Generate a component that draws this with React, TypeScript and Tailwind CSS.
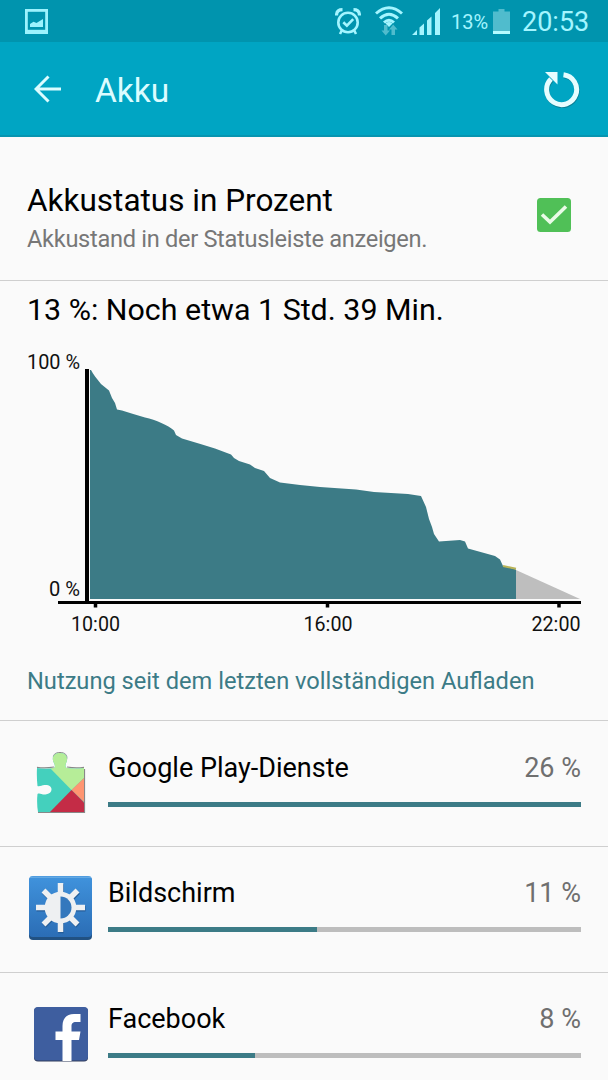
import React from "react";

function PictureIcon() {
  return (
    <svg width="23" height="25" viewBox="0 0 23 25">
      <rect x="1.4" y="1.4" width="20.2" height="22.2" fill="none" stroke="#9cf2fd" strokeWidth="2.8" />
      <path d="M1 20.8h21V25H1z" fill="#9cf2fd" />
      <path d="M5 18v-3l3.500-2.200 3 1.200L18 10v8z" fill="#9cf2fd" />
    </svg>
  );
}

function AlarmIcon() {
  return (
    <svg width="26" height="27" viewBox="0 0 26 27" fill="none" stroke="#a4f5ff">
      <circle cx="13" cy="14.500" r="9.700" strokeWidth="2.600" />
      <path d="M8.300 14.200l3.600 3.500 6.300-6.500" strokeWidth="2.600" />
      <path d="M1.500 7.500C1.500 3.500 4 1.700 7.500 1.700M24.500 7.500C24.500 3.500 22 1.700 18.500 1.700" strokeWidth="3.200" />
      <path d="M6.800 22.500L5 26M19.200 22.500L21 26" strokeWidth="2.600" />
    </svg>
  );
}

function WifiIcon() {
  return (
    <svg width="28" height="30" viewBox="0 0 28 30" fill="none">
      <path d="M1 7.500Q14-4 27 7.500M5 12.300Q14 4.200 23 12.300M9 16.500Q14 12 19 16.500" stroke="#a4f5ff" strokeWidth="3" />
      <path d="M10.500 17.500Q14 14.700 17.500 17.500L14 21z" fill="#a4f5ff" />
      <path d="M9 19h3.500v5.500H15L10.700 29.500 6.500 24.500H9zM16.500 29v-5.500H14L18.200 18.500l4.300 5H20V29z" fill="#50bccd" />
    </svg>
  );
}

function SignalIcon() {
  return (
    <svg width="28" height="27" viewBox="0 0 28 27" fill="#a4f5ff">
      <path d="M0 27l5-5V27zM7.500 27v-7.500l4.500-4V27zM15 27V12.500l4.500-4V27zM23 27V5L28 0v27z" />
    </svg>
  );
}

function BatteryIcon() {
  return (
    <svg width="17" height="25" viewBox="0 0 17 25">
      <path d="M0 2.500h5.500V0h6v2.500H17V25H0z" fill="#50bccd" />
      <path d="M0 22h17v3H0z" fill="#b4fbff" />
    </svg>
  );
}

function PlayServicesIcon() {
  return (
    <svg width="52" height="64" viewBox="0 0 52 64" className="ml-[2px]">
      <defs>
        <clipPath id="puzzle">
          <path d="M2 17Q10 18.500 19 17C20.500 16.500 20 13.500 18.500 11C16.500 6.500 19 2 25 2S33 6.500 31.500 11C30 14 30 16.500 32 17Q41 18.500 49 17V61H3Q1.500 52 2.500 43C4.500 41.500 7 44 10.500 43.500C14.500 43 16.500 41 16.500 38.500S14.500 34 10.500 34C7 33.500 5 36 2.500 35Q1.500 26 2 17Z" />
        </clipPath>
      </defs>
      <path d="M2 16.300Q10 17.500 19 16M32 16Q41 17.500 49 16.300M3 61.500H49.500V18" fill="none" stroke="#888" strokeWidth="1.200" />
      <path d="M19 9C17 4 20 1.500 25 1.500S33 4 31.500 9" fill="none" stroke="#888" strokeWidth="1" />
      <g clipPath="url(#puzzle)">
        <path d="M0 0h52v64H0z" fill="#44d0bd" />
        <path d="M14 16V0h38v24L36.500 39z" fill="#b6ed98" />
        <path d="M36.500 39L52 24v30z" fill="#ff9571" />
        <path d="M14 62l22.500-23L50 52.500V62z" fill="#c42c46" />
      </g>
    </svg>
  );
}

function BrightnessIcon() {
  return (
    <svg width="66" height="66" viewBox="0 0 66 66">
      <defs>
        <linearGradient id="display" x1="0" y1="0" x2="0" y2="1">
          <stop stopColor="#4093dd" />
          <stop offset="1" stopColor="#2b6db5" />
        </linearGradient>
      </defs>
      <rect x="2" y="2" width="63" height="63" rx="4" fill="#215182" />
      <rect x="2" y="1" width="63" height="61" rx="4" fill="url(#display)" />
      <path d="M3 2.200h61" stroke="#75b4e7" />
      <g transform="translate(.5 0)">
        <path d="M33 8v49M8.500 32.500h49M16 15.500l34 34M50 15.500l-34 34" stroke="#245d98" strokeWidth="5.500" transform="translate(.5 1.200)" />
        <path d="M33 8v49M8.500 32.500h49M16 15.500l34 34M50 15.500l-34 34" stroke="#eef0f2" strokeWidth="5.500" />
        <circle cx="33" cy="32.500" r="15.800" fill="#eef0f2" />
        <path d="M33 21.500a11 11 0 0 1 0 22z" fill="#3478bd" />
      </g>
    </svg>
  );
}

function FacebookIcon() {
  return (
    <svg width="56" height="56" viewBox="0 0 56 56" className="ml-[2px]">
      <rect x="1" y="1.500" width="54" height="54" rx="4" fill="#303c5c" />
      <rect x="1" y="1" width="54" height="53.500" rx="4" fill="#3e5e9f" />
      <path d="M29.500 55V34H22.500V25.500H29.500V20C29.500 12 34 8 41 8H47.500V16H43C39.500 16 38.500 17.500 38.500 20.500V25.500H47.500L46 34H38.500V55Z" fill="#fff" />
    </svg>
  );
}

function BatteryChart() {
  return (
    <svg width="608" height="310" viewBox="0 340 608 310" className="block shrink-0 font-['Roboto',sans-serif] text-[20px]">
      <path
        d="M90 370L91 370C93 374 97 379 101 384L109 390.500L112 398L115 403L117 409.500L122 410.500Q133 414 145 417.500C156 420 168 425 174 430.500L176 435L182 438.500Q199 443.500 215 448.500L231 454.500L234 458L239 461L250 464.500L255 468L264 471L270 478L280 482.500L300 485L320 487L356 489.500L374 492L408 494L421 496L426 507L429 519L432 527L434 534L439 541.500L460 540L465 541.500L468 548.500L495 556L500 559.500L503 566L516 569.500V599H90Z"
        fill="#3c7b86"
      />
      <path d="M516 570L580 599H516Z" fill="#bebebe" />
      <path d="M503 566L516 568.800" stroke="#b8b358" strokeWidth="2" />
      <path d="M87 369V603" stroke="#000" strokeWidth="4" />
      <path d="M58 602.500H581" stroke="#000" strokeWidth="3" />
      <path d="M95.500 603V607.500M327.500 603V607.500M559 603V607.500" stroke="#000" strokeWidth="3.500" />
      <g fill="#111">
        <text x="27" y="369" textLength="53" lengthAdjust="spacingAndGlyphs">100 %</text>
        <text x="49" y="596" textLength="31" lengthAdjust="spacingAndGlyphs">0 %</text>
        <text x="71" y="631" textLength="49" lengthAdjust="spacingAndGlyphs">10:00</text>
        <text x="303.500" y="631" textLength="49" lengthAdjust="spacingAndGlyphs">16:00</text>
        <text x="531.500" y="631" textLength="49" lengthAdjust="spacingAndGlyphs">22:00</text>
      </g>
    </svg>
  );
}

type UsageProps = { icon: React.ReactNode; name: string; value: string; bar: string };

function UsageRow({ icon, name, value, bar }: UsageProps) {
  return (
    <li className="flex h-[125.800px] border-t border-[#cfcfcf] pr-[27px] pl-[27px]">
      <div className="mr-[15px] flex h-[123px] w-[66px] items-center justify-center">{icon}</div>
      <div className="flex-1 pt-[29.500px]">
        <div className="flex justify-between text-[27px] leading-[34px]">
          <span className="text-black">{name}</span>
          <span className="text-[#6f6f6f]">{value}</span>
        </div>
        <div className="mt-[17px] h-[5px] bg-[#bdbdbd]">
          <div className={`h-full bg-[#3c7b86] ${bar}`} />
        </div>
      </div>
    </li>
  );
}

export default function App() {
  return (
    <div className="flex h-[1080px] w-[608px] flex-col overflow-hidden bg-[#fafafa] font-['Roboto',sans-serif] whitespace-nowrap">
      <div className="flex h-[42px] shrink-0 items-center justify-between bg-[#0094ae] pr-[20px] pl-[25px]">
        <PictureIcon />
        <div className="flex items-center text-[#a4f5ff]">
          <AlarmIcon />
          <span className="ml-[14px]"><WifiIcon /></span>
          <span className="ml-[9px]"><SignalIcon /></span>
          <span className="ml-[11px] w-[36px] pt-[1px] text-[20px]">13%</span>
          <span className="ml-[6px]"><BatteryIcon /></span>
          <span className="ml-[12px] w-[66px] pt-[2px] text-[27px]">20:53</span>
        </div>
      </div>
      <header className="flex h-[95px] shrink-0 items-center border-b-2 border-[#0795b0] bg-[#00a5c3] pr-[28px] pl-[34px]">
        <svg width="28" height="28" viewBox="0 0 28 28" fill="none" stroke="#dcfcff" strokeWidth="3">
          <path d="M27 14H3M14.500 1.500L2 14l12.500 12.500" />
        </svg>
        <h1 className="ml-[33px] pt-[6px] text-[33.500px] text-[#dcfcff]">Akku</h1>
        <svg width="37" height="37" viewBox="0 0 37 37" className="mt-[2px] ml-auto" fill="none">
          <path d="M20.500 3.700A15 15 0 1 1 8 8" stroke="#087e94" strokeWidth="5" transform="translate(.5 1)" />
          <path d="M20.500 3.700A15 15 0 1 1 8 8" stroke="#e6fdff" strokeWidth="5" />
          <path d="M2 1H14.500V13.500Z" fill="#e6fdff" />
        </svg>
      </header>
      <section className="flex h-[144px] shrink-0 items-center justify-between border-b border-[#cfcfcf] pr-[37px] pl-[27px]">
        <div className="pt-[20px]">
          <div className="text-[31.500px] leading-[38px] text-black">Akkustatus in Prozent</div>
          <div className="mt-[3px] text-[23.600px] leading-[32px] tracking-[-0.3px] text-[#777]">Akkustand in der Statusleiste anzeigen.</div>
        </div>
        <svg width="34" height="34" viewBox="0 0 34 34" className="mt-[12px]">
          <rect width="34" height="34" rx="3.500" fill="#50c057" />
          <path d="M5 16.500l8 7.500L29 8.500" fill="none" stroke="#eafbe7" strokeWidth="3.600" />
        </svg>
      </section>
      <h2 className="h-[59px] shrink-0 pt-[10px] pl-[27px] text-[30.400px] leading-[38px] text-black">13 %: Noch etwa 1 Std. 39 Min.</h2>
      <BatteryChart />
      <div className="h-[70px] shrink-0 pt-[15px] pl-[27px] text-[23.650px] leading-[32px] text-[#3c7b86]">Nutzung seit dem letzten vollständigen Aufladen</div>
      <ul>
        <UsageRow icon={<PlayServicesIcon />} name="Google Play-Dienste" value="26 %" bar="w-full" />
        <UsageRow icon={<BrightnessIcon />} name="Bildschirm" value="11 %" bar="w-[44.200%]" />
        <UsageRow icon={<FacebookIcon />} name="Facebook" value="8 %" bar="w-[31.100%]" />
      </ul>
    </div>
  );
}
